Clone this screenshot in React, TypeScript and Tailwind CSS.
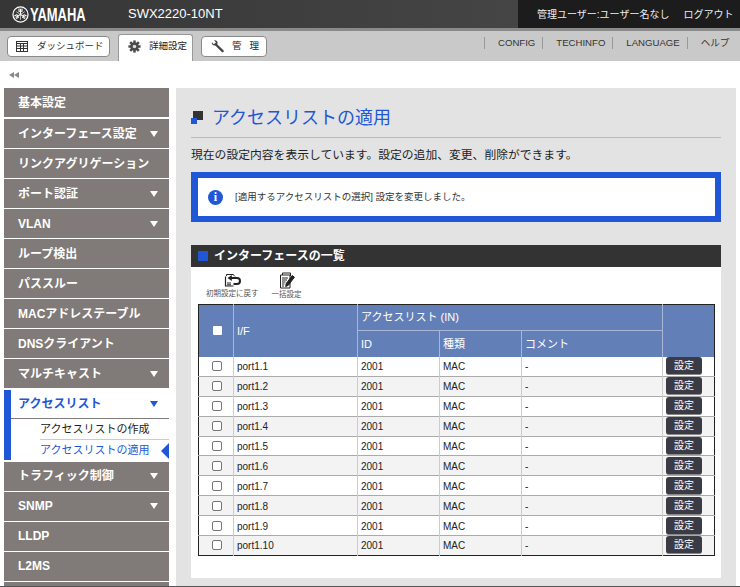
import React from "react";

const FONT = { fontFamily: '"Liberation Sans","Noto Sans CJK JP",sans-serif' };

function YamahaMark() {
  return (
    <svg width="17" height="17" viewBox="0 0 18 18" fill="none" stroke="#fff">
      <circle cx="9" cy="9" r="8" strokeWidth="1.3" />
      <g strokeWidth="1.1">
        <path d="M9 9V3M7.4 2.6v3h3.2v-3" />
        <path d="M9 9l5.2 3M15.4 10.6l-2.6-1.5-1.6 2.8 2.6 1.5" />
        <path d="M9 9l-5.2 3M2.6 10.6l2.6-1.5 1.6 2.8-2.6 1.5" />
        <path d="M9 9v5.5M9 9l-4.5-3M9 9l4.5-3" strokeWidth="0.7" />
      </g>
    </svg>
  );
}

function DashIcon() {
  return (
    <svg width="12" height="11" viewBox="0 0 12 11" fill="none" stroke="#333" strokeWidth="1">
      <rect x="0.5" y="0.5" width="11" height="10" />
      <path d="M0.5 2.5h11M4.5 2.5v8M7.5 2.5v8M0.5 5h11M0.5 7.5h11" />
    </svg>
  );
}

function GearIcon() {
  return (
    <svg width="13" height="13" viewBox="0 0 16 16">
      <g fill="#4a4a4a">
        <circle cx="8" cy="8" r="5.2" />
        <rect x="6.5" y="0.5" width="3" height="15" />
        <rect x="6.5" y="0.5" width="3" height="15" transform="rotate(45 8 8)" />
        <rect x="6.5" y="0.5" width="3" height="15" transform="rotate(90 8 8)" />
        <rect x="6.5" y="0.5" width="3" height="15" transform="rotate(135 8 8)" />
      </g>
      <circle cx="8" cy="8" r="2.2" fill="#ddd" />
    </svg>
  );
}

function WrenchIcon() {
  return (
    <svg width="13" height="13" viewBox="0 0 14 14" fill="none">
      <path d="M5 4.5l7.5 7.5" stroke="#444" strokeWidth="2.4" strokeLinecap="round" />
      <path d="M1 2.5l2 2 1.6-.6.6-1.6-2-2c2-.6 4 .6 3.9 2.8 0 1.4-1.4 3-3.3 2.9C2 6 .5 4.4 1 2.5z" fill="#444" />
    </svg>
  );
}

function ResetIcon() {
  return (
    <svg width="17" height="14" viewBox="0 0 17 14" fill="none" stroke="#222">
      <path d="M2.5 3V1.5h7M9 1.5l2 2" strokeWidth="1" />
      <path d="M1.5 3.5V13h8" strokeWidth="1.2" />
      <path d="M3 10h4M3 11.8h4" strokeWidth="1" />
      <path d="M7 5h6a2.9 2.9 0 0 1 0 6h-3.500" strokeWidth="2" />
      <path d="M3.500 5L7.800 2v6z" fill="#222" stroke="none" />
    </svg>
  );
}

function EditIcon() {
  return (
    <svg width="16" height="17" viewBox="0 0 16 17" fill="none" stroke="#222" strokeWidth="1">
      <path d="M3.5 3V1h8v3" />
      <path d="M1.5 3h9.5v13H1.5z" fill="#fff" />
      <path d="M3 6h6M3 8h5M3 10h3.5M3 12h2.5M3 14h2" />
      <path d="M13.2 3.5l2.2 1.7-6 8-2.7 1.4.5-3z" fill="#222" />
    </svg>
  );
}

function Tri({ color = "border-t-white" }: { color?: string }) {
  return <span className={`w-0 h-0 border-x-[4px] border-x-transparent border-t-[6px] ${color}`} />;
}

function NavItem({ label, arrow, box }: { label: string; arrow?: boolean; box: string }) {
  return (
    <div className={`h-[29px] bg-[#807a78] flex items-center pl-[14px] pr-[11px] justify-between text-white font-bold text-[12px] whitespace-nowrap shrink-0 ${box}`}>
      <span>{label}</span>
      {arrow && <Tri />}
    </div>
  );
}

const ports = ["port1.1", "port1.2", "port1.3", "port1.4", "port1.5", "port1.6", "port1.7", "port1.8", "port1.9", "port1.10"];

const menu1: [string, boolean][] = [
  ["基本設定", false],
  ["インターフェース設定", true],
  ["リンクアグリゲーション", false],
  ["ポート認証", true],
  ["VLAN", true],
  ["ループ検出", false],
  ["パススルー", false],
  ["MACアドレステーブル", false],
  ["DNSクライアント", false],
  ["マルチキャスト", true],
];
const menu2: [string, boolean][] = [
  ["トラフィック制御", true],
  ["SNMP", true],
  ["LLDP", false],
  ["L2MS", false],
  ["", false],
];

function Check({ white }: { white?: boolean }) {
  return white ? (
    <span className="block ml-[14px] w-[9px] h-[9px] bg-white rounded-[1px]" />
  ) : (
    <span className="block ml-[13px] w-[10px] h-[10px] bg-white border border-[#767676] rounded-[2px]" />
  );
}

export default function App() {
  return (
    <div className="w-[740px] h-[587px] overflow-hidden bg-white text-[#222] flex flex-col relative" style={FONT}>
      {/* header */}
      <header className="h-[31px] shrink-0 flex bg-[#3b3b3b] border-b-[3px] border-b-[#8a8a8a] text-white">
        <div className="flex-1 flex items-center pl-3 bg-gradient-to-r from-[#363636] to-[#454545]">
          <YamahaMark />
          <span className="w-[57px] ml-px text-[18px] font-bold origin-left scale-x-[0.72] leading-none whitespace-nowrap mt-px">YAMAHA</span>
          <span className="ml-[41px] text-[13px]">SWX2220-10NT</span>
        </div>
        <div className="w-[222px] bg-[#1c1c1c] flex items-center text-[10px] text-[#eee] pl-[19px] gap-[14px] whitespace-nowrap">
          <span>管理ユーザー:ユーザー名なし</span>
          <span>ログアウト</span>
        </div>
      </header>

      {/* tab bar */}
      <div className="h-[30px] shrink-0 bg-[#c9c9c9] flex items-end pl-[7px] text-[9.5px] relative">
        <div className="flex items-end flex-1">
          <div className="mb-[4px] h-[21px] w-[103px] bg-white border border-[#8a8a8a] rounded-[4px] flex items-center pl-[8px] gap-[9px] whitespace-nowrap">
            <DashIcon />
            <span className="text-[#333]">ダッシュボード</span>
          </div>
          <div className="ml-[8px] h-[27px] w-[75px] bg-white border border-b-0 border-[#999] rounded-t-[3px] flex items-center pl-[9px] gap-[8px] pb-[3px]">
            <GearIcon />
            <span className="text-[#222] whitespace-nowrap">詳細設定</span>
          </div>
          <div className="ml-[8px] mb-[4px] h-[21px] w-[66px] bg-white border border-[#8a8a8a] rounded-[4px] flex items-center pl-[9px]">
            <WrenchIcon />
            <span className="ml-[8px]">管</span>
            <span className="ml-[8px]">理</span>
          </div>
        </div>
        <div className="w-[256px] shrink-0 self-center flex items-center text-[9.6px] text-[#333] h-[12px] -mt-[6px] whitespace-nowrap">
          <span className="border-l border-[#999] h-full" />
          <span className="ml-[13px] pr-[7px] border-r border-[#999] leading-[12px]">CONFIG</span>
          <span className="ml-[13px] pr-[7px] border-r border-[#999] leading-[12px]">TECHINFO</span>
          <span className="ml-[13px] pr-[7px] border-r border-[#999] leading-[12px]">LANGUAGE</span>
          <span className="ml-[13px] leading-[12px]">ヘルプ</span>
        </div>
      </div>

      {/* collapse */}
      <div className="h-[27px] shrink-0 pl-[9px] flex items-center">
        <span className="w-0 h-0 border-y-[3px] border-y-transparent border-r-[5px] border-r-[#888]" />
        <span className="w-0 h-0 border-y-[3px] border-y-transparent border-r-[5px] border-r-[#888]" />
      </div>

      <div className="flex flex-1 min-h-0 pl-1 gap-[7px]">
        {/* sidebar */}
        <nav className="w-[165px] shrink-0 flex flex-col">
          {menu1.map(([l, a], i) => (
            <NavItem key={l} label={l} arrow={a} box={i === 0 ? "pt-px mb-[2px]" : "pt-px mb-px"} />
          ))}
          <div className="bg-white border-l-[7px] border-[#1f57d6] h-[70px] mt-px mb-[2px] shrink-0 flex flex-col relative">
            <div className="h-[29px] flex items-center justify-between pl-[7px] pr-[11px] pb-px text-[#1f57d6] font-bold text-[12px] border-b border-[#807a78]">
              <span>アクセスリスト</span>
              <Tri color="border-t-[#1f57d6]" />
            </div>
            <div className="pl-[29px] text-[11px]">
              <div className="h-[21px] flex items-center border-b border-[#ccc]">アクセスリストの作成</div>
              <div className="h-[20px] flex items-center text-[#1f57d6]">アクセスリストの適用</div>
            </div>
            <span className="absolute right-0 bottom-px w-0 h-0 border-y-[8px] border-y-transparent border-r-[8px] border-r-[#1f57d6]" />
          </div>
          {menu2.map(([l, a], i) => (
            <NavItem key={i} label={l} arrow={a} box="pb-px mb-px" />
          ))}
        </nav>

        {/* main */}
        <main className="w-[560px] bg-[#e3e3e3] px-[15px] shrink-0 flex flex-col">
          <div className="h-[49px] mt-[1px] pt-[9px] flex items-center gap-[9px] shrink-0 border-b border-[#bbb]">
            <span className="relative w-[12px] h-[13px] shrink-0">
              <span className="absolute right-0 top-0 w-[10px] h-[9px] bg-[#333]" />
              <span className="absolute left-0 bottom-0 w-[6px] h-[6px] bg-[#1f57d6]" />
            </span>
            <h1 className="text-[18px] text-[#1f57d6] font-normal leading-none">アクセスリストの適用</h1>
          </div>
          <p className="mt-[9px] text-[11.8px] leading-[16px] text-[#222] whitespace-nowrap">現在の設定内容を表示しています。設定の追加、変更、削除ができます。</p>
          <div className="mt-[9px] h-[50px] shrink-0 border-[6px] border-l-[7px] border-[#1f57d6] bg-white flex items-center pl-[10px] gap-[12px] text-[9.5px] text-[#333]">
            <span className="w-[15px] h-[15px] rounded-full bg-[#1f57d6] text-white font-bold text-[12px] flex items-center justify-center leading-none" style={{ fontFamily: '"Liberation Serif",serif' }}>i</span>
            <span>[適用するアクセスリストの選択] 設定を変更しました。</span>
          </div>
          <div className="mt-[23px] bg-white h-[333px] shrink-0 flex flex-col">
            <div className="h-[22px] bg-[#333] flex items-center pl-[7px] gap-[6px] text-white font-bold text-[12px] shrink-0">
              <span className="w-[10px] h-[10px] bg-[#1f57d6]" />
              <span>インターフェースの一覧</span>
            </div>
            <div className="h-[37px] shrink-0 flex text-[7.5px] text-[#555] pl-[15px] pt-[6px] gap-[14px]">
              <div className="flex flex-col items-center gap-[1px]">
                <ResetIcon />
                <span>初期設定に戻す</span>
              </div>
              <div className="flex flex-col items-center -mt-px -ml-px">
                <EditIcon />
                <span>一括設定</span>
              </div>
            </div>
            <div className="px-[7px]">
              <table className="w-[516px] border-collapse table-fixed border border-[#222] text-[10px] text-[#222]">
                <colgroup>
                  <col className="w-[35px]" />
                  <col className="w-[124px]" />
                  <col className="w-[82px]" />
                  <col className="w-[82px]" />
                  <col className="w-[141px]" />
                  <col className="w-[52px]" />
                </colgroup>
                <thead className="bg-[#637fb8] text-white text-[11px] font-normal">
                  <tr className="h-[26px]">
                    <th rowSpan={2} className="border border-[#a9b6d5] border-l-0 border-t-0 border-b-0 p-0"><Check white /></th>
                    <th rowSpan={2} className="border border-[#a9b6d5] border-t-0 border-b-0 text-left font-normal pl-[3px]">I/F</th>
                    <th colSpan={3} className="border border-[#a9b6d5] border-t-0 text-left font-normal pl-[3px]">アクセスリスト (IN)</th>
                    <th rowSpan={2} className="border-l border-[#a9b6d5]" />
                  </tr>
                  <tr className="h-[26px]">
                    <th className="border-r border-[#a9b6d5] text-left font-normal pl-[3px]">ID</th>
                    <th className="border-r border-[#a9b6d5] text-left font-normal pl-[3px]">種類</th>
                    <th className="border-r border-[#a9b6d5] text-left font-normal pl-[3px]">コメント</th>
                  </tr>
                </thead>
                <tbody>
                  {ports.map((p, i) => (
                    <tr key={p} className={`h-[19.9px] ${i % 2 ? "bg-[#f3f3f3]" : "bg-white"} border-b border-[#aaa] last:border-b-0`}>
                      <td className="border-r border-[#ccc] p-0"><Check /></td>
                      <td className="border-r border-[#ccc] pl-[3px] pt-[2px] leading-none">{p}</td>
                      <td className="border-r border-[#ccc] pl-[3px] pt-[2px] leading-none">2001</td>
                      <td className="border-r border-[#ccc] pl-[3px] pt-[2px] leading-none">MAC</td>
                      <td className="border-r border-[#ccc] pl-[3px] pt-[2px] leading-none">-</td>
                      <td className="p-0 leading-none">
                        <span className="block ml-[3px] w-[36px] h-[18px] bg-[#3a3b45] rounded-[3px] text-white text-[10px] text-center leading-[17px] border-b border-[#888]">設定</span>
                      </td>
                    </tr>
                  ))}
                </tbody>
              </table>
            </div>
          </div>
        </main>
      </div>
      <div className="absolute left-0 right-0 bottom-0 h-px bg-[#555]" />
    </div>
  );
}
